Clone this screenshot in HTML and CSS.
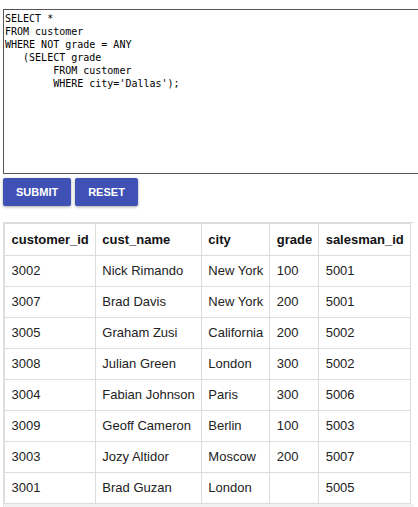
FILE: index.html
```html
<!DOCTYPE html>
<html>
<head>
<meta charset="utf-8">
<link rel="stylesheet" href="styles.css">
</head>
<body>
<div class="page">
<textarea class="editor" spellcheck="false">SELECT *
FROM customer
WHERE NOT grade = ANY
   (SELECT grade
        FROM customer
        WHERE city='Dallas');</textarea>
<div class="actions">
  <button class="btn">SUBMIT</button>
  <button class="btn">RESET</button>
</div>
<div class="table-wrap">
<table class="result">
<thead>
<tr><th>customer_id</th><th>cust_name</th><th>city</th><th>grade</th><th>salesman_id</th></tr>
</thead>
<tbody>
<tr><td>3002</td><td>Nick Rimando</td><td>New York</td><td>100</td><td>5001</td></tr>
<tr><td>3007</td><td>Brad Davis</td><td>New York</td><td>200</td><td>5001</td></tr>
<tr><td>3005</td><td>Graham Zusi</td><td>California</td><td>200</td><td>5002</td></tr>
<tr><td>3008</td><td>Julian Green</td><td>London</td><td>300</td><td>5002</td></tr>
<tr><td>3004</td><td>Fabian Johnson</td><td>Paris</td><td>300</td><td>5006</td></tr>
<tr><td>3009</td><td>Geoff Cameron</td><td>Berlin</td><td>100</td><td>5003</td></tr>
<tr><td>3003</td><td>Jozy Altidor</td><td>Moscow</td><td>200</td><td>5007</td></tr>
<tr><td>3001</td><td>Brad Guzan</td><td>London</td><td></td><td>5005</td></tr>
</tbody>
</table>
</div>
</div>
</body>
</html>
```
FILE: styles.css
```css
html, body {
  margin: 0;
  padding: 0;
  overflow: hidden;
  background: #fff;
}
.page {
  padding: 9px 0 0 3px;
  font-family: "Liberation Sans", Arial, sans-serif;
}
.editor {
  display: block;
  box-sizing: border-box;
  width: 416px;
  height: 165px;
  margin: 0;
  padding: 2px 1px;
  border: 1px solid #555;
  border-radius: 0;
  font-family: "DejaVu Sans Mono", monospace;
  font-size: 10px;
  line-height: 13px;
  color: #000;
  resize: none;
  outline: none;
  overflow: hidden;
  white-space: pre;
}
.actions {
  display: flex;
  gap: 4px;
  margin-top: 4px;
}
.btn {
  height: 28px;
  padding: 0 13px;
  border: none;
  border-radius: 2px;
  background: #3f51b5;
  color: #fff;
  font-family: "Liberation Sans", Arial, sans-serif;
  font-weight: bold;
  font-size: 11px;
  box-shadow: 0 1px 3px rgba(0,0,0,0.35);
  cursor: pointer;
}
.table-wrap {
  margin-top: 16px;
  width: 410px;
  border-top: 1px solid #ddd;
  border-left: 1px solid #ddd;
  border-bottom: 6px solid #f1f1f1;
}
.result {
  border-collapse: collapse;
  font-size: 13px;
  color: #222;
}
.result th, .result td {
  border: 1px solid #ddd;
  text-align: left;
  padding: 7px 6px 7px 6.5px;
  line-height: 16px;
  white-space: nowrap;
}
.result th {
  font-weight: bold;
  color: #111;
  padding-top: 7.5px;
  padding-bottom: 7.5px;
}
```
